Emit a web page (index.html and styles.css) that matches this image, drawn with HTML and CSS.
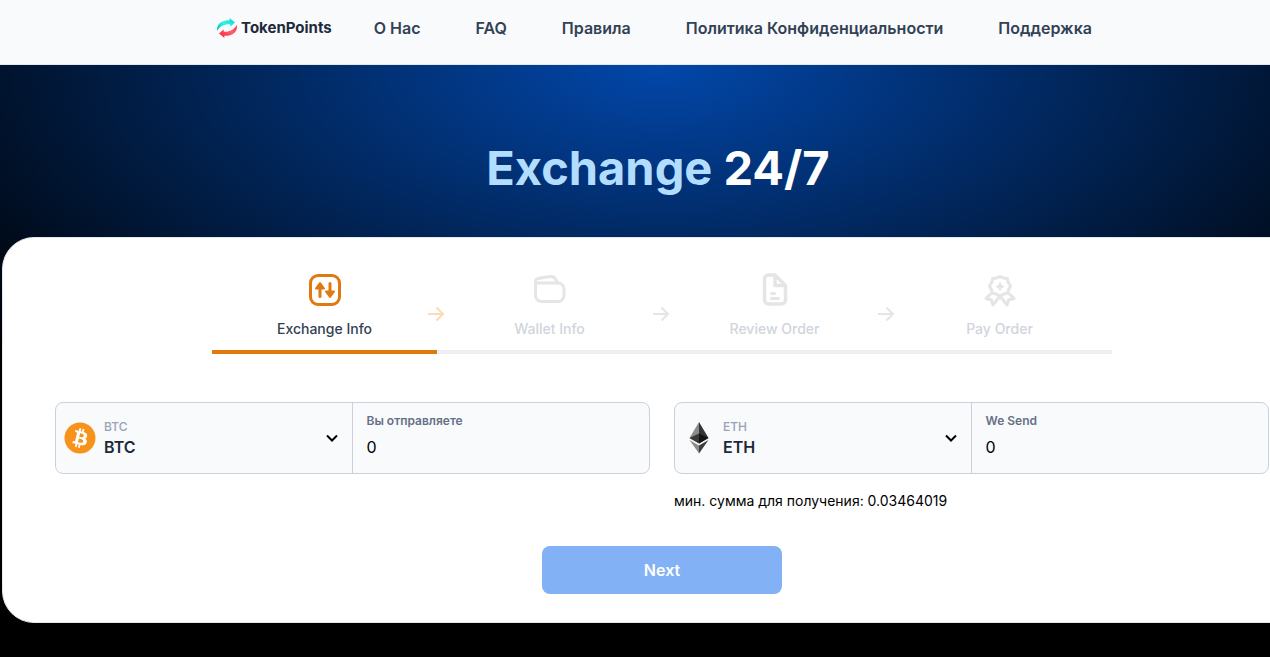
FILE: index.html
```html
<!DOCTYPE html>
<html lang="ru">
<head>
<meta charset="utf-8">
<meta name="viewport" content="width=device-width, initial-scale=1">
<title>TokenPoints</title>
<link rel="stylesheet" href="styles.css">
</head>
<body>
<header class="header">
  <a class="brand" href="#">
    <svg class="brand-icon" viewBox="0 0 20 20" aria-hidden="true">
      <defs>
        <linearGradient id="teal" x1="0" y1="1" x2="1" y2="0"><stop offset="0" stop-color="#0fb5ba"/><stop offset=".5" stop-color="#2ff5ea"/><stop offset="1" stop-color="#12c9cf"/></linearGradient>
        <linearGradient id="red" x1="0" y1="1" x2="1" y2="0"><stop offset="0" stop-color="#f5203c"/><stop offset=".6" stop-color="#ff5f70"/><stop offset="1" stop-color="#f5203c"/></linearGradient>
      </defs>
      <path fill="url(#teal)" d="M.2 13C-.8 6 4.500 1.800 12.800 2.200L12.500 0l5.500 4.500-4.500 4-.5-2.200C7.500 6 3 8 .2 13z"/>
      <path fill="url(#red)" d="M19.800 7c1 7-4.300 11.200-12.600 10.800L7.500 20 2 15.500l4.500-4 .5 2.200c5.500.3 10-1.700 12.800-6.700z"/>
    </svg>
    <span>TokenPoints</span>
  </a>
  <nav class="nav">
    <a href="#">О Нас</a>
    <a href="#">FAQ</a>
    <a href="#">Правила</a>
    <a href="#">Политика Конфиденциальности</a>
    <a href="#">Поддержка</a>
  </nav>
</header>
<main class="hero">
  <h1 class="title"><span class="title-accent">Exchange</span> 24/7</h1>
  <form class="card">
    <ol class="steps">
      <li class="step step-active">
        <svg class="step-icon" viewBox="0 0 36 36" aria-hidden="true"><rect x="3.500" y="3.500" width="29" height="29" rx="7.500" fill="none" stroke="currentColor" stroke-width="3"/><g stroke="currentColor" stroke-width="3" stroke-linecap="round" stroke-linejoin="round" fill="currentColor"><path d="M13 24.500V14M23 11.500V22"/><path stroke-width="2" d="M9 16.500l4-5.500 4 5.500zM19 19.500l4 5.500 4-5.500z"/></g></svg>
        <span>Exchange Info</span>
        <svg class="step-arrow" viewBox="0 0 18 18" aria-hidden="true"><path d="M1 9h15M9.500 2.500L16 9l-6.500 6.500"/></svg>
      </li>
      <li class="step">
        <svg class="step-icon" viewBox="0 0 36 36" fill="none" stroke="currentColor" stroke-width="3" stroke-linejoin="round" aria-hidden="true"><path d="M3.500 11h22.500a6 6 0 0 1 6 6v6.500a6 6 0 0 1-6 6H9.500a6 6 0 0 1-6-6z"/><path d="M3.500 11V9.500c0-1.700 1-2.600 2.500-3l12-2c3.500-.5 6 2 7 6"/></svg>
        <span>Wallet Info</span>
        <svg class="step-arrow" viewBox="0 0 18 18" aria-hidden="true"><path d="M1 9h15M9.500 2.500L16 9l-6.500 6.500"/></svg>
      </li>
      <li class="step">
        <svg class="step-icon" viewBox="0 0 36 36" fill="none" stroke="currentColor" stroke-width="3.500" stroke-linecap="round" stroke-linejoin="round" aria-hidden="true"><path d="M18 3h-6.500a4 4 0 0 0-4 4v21a4 4 0 0 0 4 4h13a4 4 0 0 0 4-4V13.500zM18 4v9.500h9.500"/><path stroke-width="3" d="M14.500 21.500h3M14.500 26.500h7"/></svg>
        <span>Review Order</span>
        <svg class="step-arrow" viewBox="0 0 18 18" aria-hidden="true"><path d="M1 9h15M9.500 2.500L16 9l-6.500 6.500"/></svg>
      </li>
      <li class="step">
        <svg class="step-icon" viewBox="0 0 36 36" fill="none" stroke="currentColor" stroke-width="3" stroke-linejoin="round" aria-hidden="true"><path d="M18 4.500l3.500 1.400 3.700.6 1 3.800 2.500 3.700-2 3.500-1 3.800-3.900.7-3.800 1.900-3.800-1.900-3.900-.7-1-3.800-2-3.500 2.500-3.700 1-3.800 3.700-.6z"/><path d="M9 21.500L4 26.500l5.500 1.500 1.500 5 7-9 7 9 1.500-5 5.500-1.500-5-5"/><path fill="currentColor" stroke-width="1" d="M18 10.500l1.200 2.800L22 14.500l-2.800 1.200L18 18.500l-1.200-2.800-2.800-1.200 2.800-1.200z"/></svg>
        <span>Pay Order</span>
      </li>
    </ol>
    <div class="fields">
      <div class="group">
        <div class="currency">
          <svg class="coin" viewBox="0 0 32 32" aria-hidden="true"><circle cx="16" cy="16" r="15.500" fill="#f7931a"/><path fill="#fff" d="M23.189 14.020c.314-2.096-1.283-3.223-3.465-3.975l.708-2.840-1.728-.43-.69 2.765c-.454-.114-.92-.22-1.385-.326l.695-2.783L15.596 6l-.708 2.839c-.376-.086-.746-.17-1.104-.26l.002-.009-2.384-.595-.46 1.846s1.283.294 1.256.312c.7.175.826.638.805 1.006l-.806 3.235c.048.012.11.030.18.057l-.183-.045-1.130 4.532c-.086.212-.303.531-.793.410.018.025-1.256-.313-1.256-.313l-.858 1.978 2.250.561c.418.105.828.215 1.231.318l-.715 2.872 1.727.43.708-2.840c.472.127.930.245 1.378.357l-.706 2.828 1.728.43.715-2.866c2.948.558 5.164.333 6.097-2.333.752-2.146-.037-3.385-1.588-4.192 1.130-.26 1.980-1.003 2.207-2.538zm-3.950 5.538c-.533 2.147-4.148.986-5.320.695l.950-3.805c1.172.293 4.929.872 4.370 3.110zm.535-5.569c-.487 1.953-3.495.960-4.470.717l.860-3.450c.975.243 4.118.696 3.610 2.733z"/></svg>
          <div class="currency-text">
            <label for="from">BTC</label>
            <select id="from"><option>BTC</option><option>ETH</option></select>
          </div>
          <svg class="chevron" viewBox="0 0 12 8" aria-hidden="true"><path d="M1 1.500l5 5 5-5"/></svg>
        </div>
        <div class="amount">
          <label for="send">Вы отправляете</label>
          <input id="send" type="text" inputmode="decimal" value="0">
        </div>
      </div>
      <div class="group">
        <div class="currency">
          <svg class="coin" viewBox="0 0 32 32" aria-hidden="true"><path fill="#343434" d="M16 0l9.500 16L16 21.500z"/><path fill="#8c8c8c" d="M16 0v21.500L6.500 16z"/><path fill="#141414" d="M16 11.500l9.500 4.500L16 21.500z"/><path fill="#393939" d="M16 11.500v10L6.500 16z"/><path fill="#3c3c3b" d="M16 23.500l9.500-5.500L16 31.500z"/><path fill="#8c8c8c" d="M16 23.500v8L6.500 18z"/></svg>
          <div class="currency-text">
            <label for="to">ETH</label>
            <select id="to"><option>ETH</option><option>BTC</option></select>
          </div>
          <svg class="chevron" viewBox="0 0 12 8" aria-hidden="true"><path d="M1 1.500l5 5 5-5"/></svg>
        </div>
        <div class="amount">
          <label for="receive">We Send</label>
          <input id="receive" type="text" inputmode="decimal" value="0">
        </div>
      </div>
      <p class="hint">мин. сумма для получения: 0.03464019</p>
    </div>
    <button class="next" type="button">Next</button>
  </form>
</main>
</body>
</html>
```
FILE: styles.css
```css
* {
  box-sizing: border-box;
}

body {
  margin: 0;
  min-height: 100vh;
  overflow-x: hidden;
  background: #000;
  color: #0f172a;
  font-family: Inter, "Liberation Sans", sans-serif;
}

.header {
  display: flex;
  justify-content: center;
  gap: 42px;
  padding: 18px 16px 26px 55px;
  border-bottom: 1px solid #e2e8f0;
  background: #f8fafc;
  line-height: 20px;
}

.brand {
  display: flex;
  align-items: center;
  align-self: flex-start;
  gap: 4px;
  color: #1e293b;
  font-size: 15px;
  font-weight: 700;
  text-decoration: none;
}

.brand-icon {
  width: 20px;
  height: 20px;
}

.nav {
  display: flex;
  gap: 55px;
}

.nav a {
  color: #334155;
  font-size: 16px;
  font-weight: 600;
  text-decoration: none;
}

.hero {
  display: flex;
  flex-direction: column;
  min-width: 1322px;
  padding: 73px 0 34px 2px;
  background: radial-gradient(ellipse 900px 415px at 50% 0, #0247aa, #000);
}

.title {
  margin: 0 0 39px;
  padding-right: 8px;
  color: #fff;
  font-size: 47px;
  font-weight: 700;
  line-height: 60px;
  text-align: center;
}

.title-accent {
  color: #b2ddff;
}

.card {
  display: flex;
  flex-direction: column;
  align-items: center;
  padding: 34px 52px 28px;
  border: 1px solid #e2e8f0;
  border-radius: 32px;
  background: #fff;
}

.steps {
  display: grid;
  grid-template-columns: repeat(4, 1fr);
  width: 100%;
  max-width: 900px;
  margin: 0 0 48px;
  padding: 0;
  list-style: none;
}

.step {
  position: relative;
  display: flex;
  flex-direction: column;
  align-items: center;
  gap: 12px;
  padding-bottom: 12px;
  border-bottom: 4px solid #eee;
  color: #e5e5e5;
  font-size: 14px;
  font-weight: 500;
  line-height: 18px;
}

.step span {
  color: #d0d5dd;
}

.step-active {
  border-color: #e0790f;
  color: #e0790f;
}

.step-active span {
  color: #344054;
}

.step-icon {
  width: 36px;
  height: 36px;
}

.step-arrow {
  position: absolute;
  top: 33px;
  right: -8px;
  width: 18px;
  height: 18px;
  fill: none;
  stroke: #e5e5e5;
  stroke-width: 2;
}

.step-active .step-arrow {
  stroke: #fddcb5;
}

.fields {
  display: grid;
  grid-template-columns: 1fr 1fr;
  gap: 17px 24px;
  width: 100%;
}

.group {
  display: grid;
  grid-template-columns: 1fr 1fr;
  height: 72px;
  border: 1px solid #cbd0dc;
  border-radius: 8px;
  background: #f8fafc;
}

.currency {
  display: flex;
  align-items: center;
  gap: 8px;
  padding: 0 14px 0 8px;
  border-right: 1px solid #cbd0dc;
}

.coin {
  width: 32px;
  height: 32px;
}

.currency-text {
  display: flex;
  flex: 1;
  flex-direction: column;
  padding-top: 2px;
  color: #98a2b3;
  font-size: 12px;
  font-weight: 500;
  line-height: 16px;
}

.currency-text select {
  width: 100%;
  height: 24px;
  padding: 0;
  border: 0;
  appearance: none;
  background: none;
  color: #1d2939;
  font: 600 16px/24px Inter, "Liberation Sans", sans-serif;
}

.chevron {
  width: 12px;
  height: 8px;
  fill: none;
  stroke: #000;
  stroke-width: 2;
}

.amount {
  display: flex;
  flex-direction: column;
  gap: 6px;
  padding: 10px 14px;
  color: #667085;
  font-size: 12px;
  font-weight: 600;
  line-height: 16px;
}

.amount input {
  width: 100%;
  height: 24px;
  padding: 0;
  border: 0;
  background: none;
  color: #000;
  font: 400 16px/24px Inter, "Liberation Sans", sans-serif;
}

.hint {
  grid-column: 2;
  margin: 0;
  color: #000;
  font-size: 14px;
  line-height: 20px;
}

.next {
  width: 240px;
  height: 48px;
  margin-top: 35px;
  border: 0;
  border-radius: 8px;
  background: #82b1f6;
  color: #fff;
  font: 600 16px/24px Inter, "Liberation Sans", sans-serif;
}
```
